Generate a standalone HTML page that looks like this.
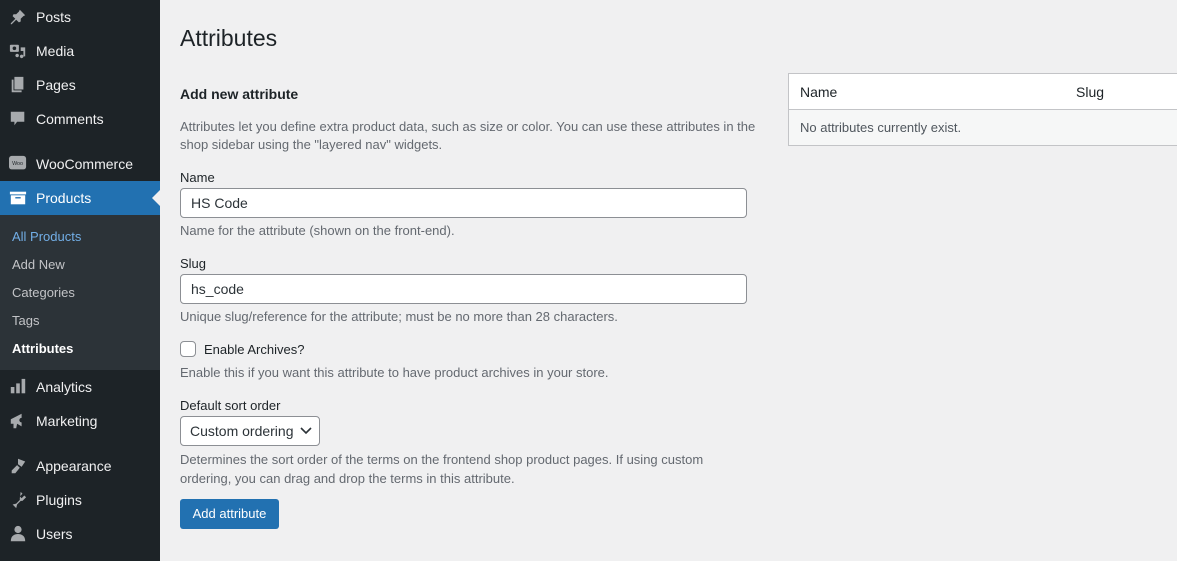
<!DOCTYPE html>
<html><head><style>
*{box-sizing:border-box;margin:0;padding:0}
body{width:1177px;height:561px;overflow:hidden;background:#f0f0f1;font-family:"Liberation Sans",sans-serif;font-size:13px;color:#1d2327;position:relative}
#sb{position:absolute;left:0;top:0;width:160px;height:561px;background:#1d2327}
.mi{position:absolute;left:0;width:160px;height:34px;color:#f0f0f1;font-size:14px;line-height:34px;padding-left:36px}
.ic{position:absolute;left:8px;top:8px;width:20px;height:18px;}
#sub{position:absolute;left:0;top:215px;width:160px;height:155px;background:#2c3338}
.si{position:absolute;left:12px;color:#c3c4c7;font-size:13px}
.t{position:absolute;left:180px;white-space:nowrap}
.h{color:#646970}
input.f{position:absolute;left:180px;width:567px;height:30px;border:1px solid #8c8f94;border-radius:4px;background:#fff;font:14px "Liberation Sans",sans-serif;padding:0 10px;color:#2c3338}
</style></head><body>
<div id="sb">
<div class="mi" style="top:0">Posts<svg class="ic" viewBox="0 0 20 20"><path d="M12 2l6 6-2 1-3 3 0 3-2 1-3-3-5 5-1 0 0-1 5-5-3-3 1-2 3 0 3-3z" fill="#a7aaad"/></svg></div>
<div class="mi" style="top:34px">Media<svg class="ic" viewBox="0 0 20 20"><rect x="1" y="3" width="10" height="8" rx="1" fill="#a7aaad"/><circle cx="6" cy="7" r="2" fill="#1d2327"/><path d="M13 6h5v10h-2v-6h-3z M9 13a2 2 0 1 0 .1 0zM14 14a2 2 0 1 0 .1 0z" fill="#a7aaad"/></svg></div>
<div class="mi" style="top:68px">Pages<svg class="ic" viewBox="0 0 20 20"><path d="M6 1h10v14H6z M3 4h2v12h9v2H3z" fill="#a7aaad"/></svg></div>
<div class="mi" style="top:102px">Comments<svg class="ic" viewBox="0 0 20 20"><path d="M2 2h15v11H9l-3 4v-4H2z" fill="#a7aaad"/></svg></div>
<div class="mi" style="top:147px">WooCommerce<svg class="ic" viewBox="0 0 20 20"><rect x="0" y="1" width="19" height="15" rx="3" fill="#a7aaad"/><text x="9.5" y="11" font-size="6" text-anchor="middle" fill="#1d2327" font-family="Liberation Sans">Woo</text></svg></div>
<div class="mi" style="top:181px;background:#2271b1;color:#fff">Products<svg class="ic" viewBox="0 0 20 20"><rect x="1" y="3" width="18" height="3" fill="#fff"/><rect x="2" y="7" width="16" height="10" fill="#fff"/><rect x="7" y="9" width="6" height="1.5" fill="#2271b1"/></svg><div style="position:absolute;right:0;top:9px;border:8px solid transparent;border-right-color:#f0f0f1"></div></div>
<div id="sub">
<div class="si" style="top:14px;color:#72aee6">All Products</div>
<div class="si" style="top:42px">Add New</div>
<div class="si" style="top:70px">Categories</div>
<div class="si" style="top:98px">Tags</div>
<div class="si" style="top:126px;color:#fff;font-weight:bold">Attributes</div>
</div>
<div class="mi" style="top:370px">Analytics<svg class="ic" viewBox="0 0 20 20"><rect x="2" y="10" width="4" height="7" fill="#a7aaad"/><rect x="8" y="6" width="4" height="11" fill="#a7aaad"/><rect x="14" y="1" width="4" height="16" fill="#a7aaad"/></svg></div>
<div class="mi" style="top:404px">Marketing<svg class="ic" viewBox="0 0 20 20"><path d="M2 8l12-6v14L9 13l-1 5H5l0-5H2z" fill="#a7aaad"/><circle cx="14" cy="9" r="2.5" fill="#1d2327"/></svg></div>
<div class="mi" style="top:449px">Appearance<svg class="ic" viewBox="0 0 20 20"><path d="M10 2l8 3-4 6-4-3zM9 9l3 3-5 6-4 0 0-3z" fill="#a7aaad"/></svg></div>
<div class="mi" style="top:483px">Plugins<svg class="ic" viewBox="0 0 20 20"><path d="M13 1l2 2-3 3 2 2 3-3 2 2-4 4-2 0-4 4-1 4-4-4 4-1 4-4 0-2z" fill="#a7aaad"/></svg></div>
<div class="mi" style="top:517px">Users<svg class="ic" viewBox="0 0 20 20"><circle cx="10" cy="5" r="4" fill="#a7aaad"/><path d="M2 18c0-6 4-8 8-8s8 2 8 8z" fill="#a7aaad"/></svg></div>
</div>

<div class="t" style="top:25px;font-size:23px">Attributes</div>
<div class="t" style="top:86px;font-size:14px;font-weight:bold">Add new attribute</div>
<div class="t h" style="top:118px;line-height:18px">Attributes let you define extra product data, such as size or color. You can use these attributes in the<br>shop sidebar using the "layered nav" widgets.</div>
<div class="t" style="top:170px">Name</div>
<input class="f" style="top:188px" value="HS Code">
<div class="t h" style="top:223px">Name for the attribute (shown on the front-end).</div>
<div class="t" style="top:256px">Slug</div>
<input class="f" style="top:274px" value="hs_code">
<div class="t h" style="top:309px">Unique slug/reference for the attribute; must be no more than 28 characters.</div>
<div style="position:absolute;left:180px;top:341px;width:16px;height:16px;border:1px solid #8c8f94;border-radius:4px;background:#fff"></div>
<div class="t" style="top:342px;left:204px">Enable Archives?</div>
<div class="t h" style="top:365px">Enable this if you want this attribute to have product archives in your store.</div>
<div class="t" style="top:398px">Default sort order</div>
<div style="position:absolute;left:180px;top:416px;width:140px;height:30px;border:1px solid #8c8f94;border-radius:4px;background:#fff;font-size:14px;line-height:28px;padding-left:9px;color:#2c3338">Custom ordering<svg style="position:absolute;right:7px;top:10px" width="12" height="8" viewBox="0 0 12 8"><path d="M1 1l5 5 5-5" stroke="#2c3338" stroke-width="1.6" fill="none"/></svg></div>
<div class="t h" style="top:450px;line-height:19px">Determines the sort order of the terms on the frontend shop product pages. If using custom<br>ordering, you can drag and drop the terms in this attribute.</div>
<div style="position:absolute;left:180px;top:499px;width:99px;height:30px;background:#2271b1;border-radius:3px;color:#fff;line-height:30px;text-align:center">Add attribute</div>

<div style="position:absolute;left:788px;top:73px;width:400px;height:73px;border:1px solid #c3c4c7;background:#f6f7f7">
<div style="height:36px;background:#fff;border-bottom:1px solid #c3c4c7;position:relative;font-size:14px;line-height:36px">
<span style="position:absolute;left:11px">Name</span><span style="position:absolute;left:287px">Slug</span></div>
<div style="padding-left:11px;line-height:36px;color:#50575e">No attributes currently exist.</div>
</div>
</body></html>
